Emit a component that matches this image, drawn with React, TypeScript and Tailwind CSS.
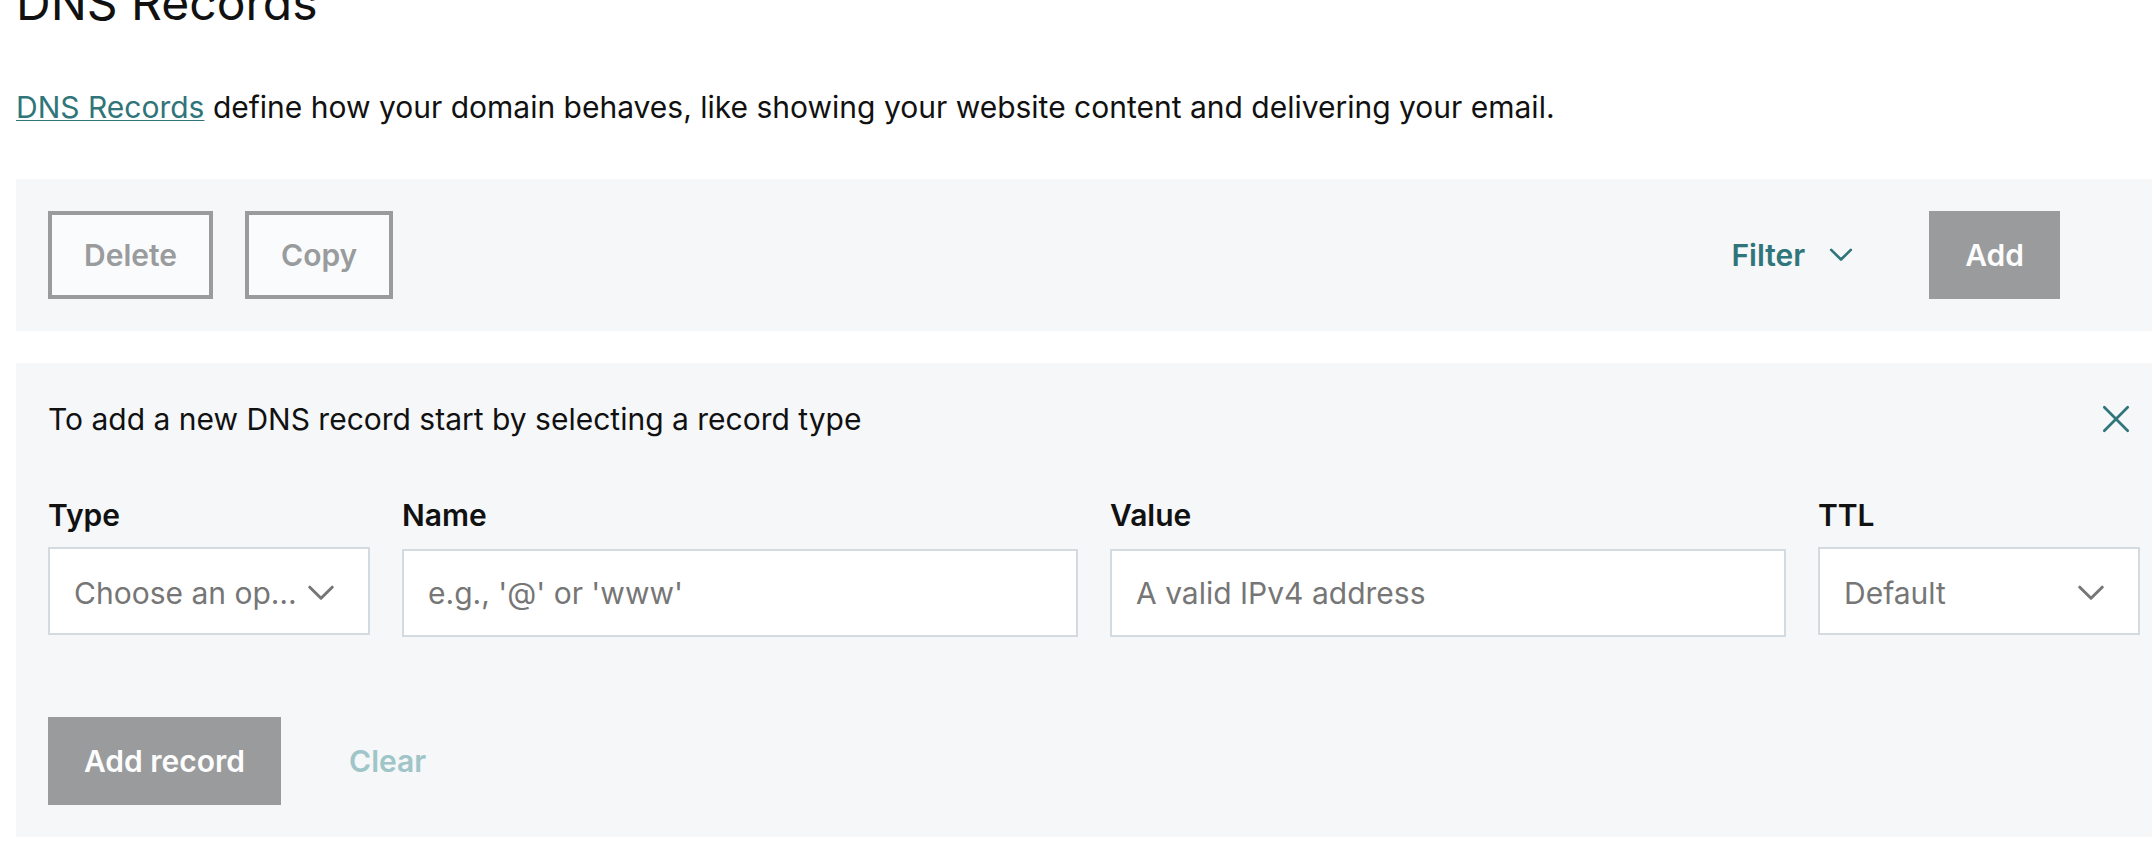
import React from "react";

function Chevron({ className }: { className: string }) {
  return (
    <svg viewBox="0 0 26 16" fill="none" stroke="currentColor" strokeWidth="3" strokeLinecap="round" strokeLinejoin="round" aria-hidden="true" className={className}>
      <path d="M1.8 2.2 13 13.2 24.2 2.2" />
    </svg>
  );
}

function SelectField({ id, label, placeholder, options }: { id: string; label: string; placeholder: string; options: string[] }) {
  return (
    <div className="flex w-[322px] shrink-0 flex-col gap-2">
      <label htmlFor={id} className="font-semibold">{label}</label>
      <div className="grid items-center">
        <select
          id={id}
          defaultValue=""
          className="col-start-1 row-start-1 h-[88px] w-full appearance-none overflow-hidden text-ellipsis whitespace-nowrap border-2 border-[#d4dbe0] bg-white pt-1 pr-[68px] pl-6 text-[#767676]"
        >
          <option value="">{placeholder}</option>
          {options.map((o) => (
            <option key={o}>{o}</option>
          ))}
        </select>
        <Chevron className="pointer-events-none col-start-1 row-start-1 mt-1 mr-9 h-4 w-[26px] justify-self-end text-[#767676]" />
      </div>
    </div>
  );
}

function TextField({ id, label, placeholder }: { id: string; label: string; placeholder: string }) {
  return (
    <div className="flex min-w-0 flex-1 flex-col gap-[10px]">
      <label htmlFor={id} className="font-semibold">{label}</label>
      <input
        id={id}
        type="text"
        placeholder={placeholder}
        className="h-[88px] w-full border-2 border-[#d4dbe0] bg-white px-6 text-[#111] placeholder:text-[#767676]"
      />
    </div>
  );
}

export default function App() {
  return (
    <main className="overflow-hidden bg-white pb-7 pl-4 font-['Inter','Noto_Sans',sans-serif] text-[30px] leading-[48px] text-[#111]">
      <h1 className="-mt-[27px] mb-[50px] text-[48px] leading-[60px]">DNS Records</h1>
      <p className="mb-12">
        <a href="#dns-records" className="text-[#2f7579] underline decoration-1 underline-offset-2">DNS Records</a>{" "}
        define how your domain behaves, like showing your website content and delivering your email.
      </p>

      <section aria-label="Record actions" className="mb-8 flex items-center bg-[#f5f7f9] py-8 pr-[92px] pl-8 font-semibold">
        <div className="flex flex-1 gap-8">
          <button type="button" disabled className="h-[88px] border-4 border-[#999b9c] bg-[#fafbfc] px-8 text-[#999b9c]">Delete</button>
          <button type="button" disabled className="h-[88px] border-4 border-[#999b9c] bg-[#fafbfc] px-8 text-[#999b9c]">Copy</button>
        </div>
        <button type="button" className="mr-[76px] flex items-center gap-6 text-[#2f7579]">
          Filter
          <Chevron className="h-[14px] w-6" />
        </button>
        <button type="button" disabled className="h-[88px] bg-[#999b9c] px-9 text-[#fdfdfd]">Add</button>
      </section>

      <form aria-label="New DNS record" className="bg-[#f5f7f9] py-8 pr-3 pl-8" onSubmit={(e) => e.preventDefault()}>
        <div className="mb-12 flex items-center justify-between">
          <p>To add a new DNS record start by selecting a record type</p>
          <button type="button" aria-label="Close" className="mr-[10px] text-[#2f7579]">
            <svg viewBox="0 0 28 28" fill="none" stroke="currentColor" strokeWidth="2.7" strokeLinecap="round" aria-hidden="true" className="size-7">
              <path d="M2.3 2.3 25.7 25.7M25.7 2.3 2.3 25.7" />
            </svg>
          </button>
        </div>
        <div className="mb-20 flex items-start gap-8">
          <SelectField id="type" label="Type" placeholder="Choose an option" options={["A", "AAAA", "CNAME", "MX", "TXT"]} />
          <TextField id="name" label="Name" placeholder="e.g., '@' or 'www'" />
          <TextField id="value" label="Value" placeholder="A valid IPv4 address" />
          <SelectField id="ttl" label="TTL" placeholder="Default" options={["1/2 Hour", "1 Hour", "Custom"]} />
        </div>
        <div className="flex items-center gap-[68px] font-semibold">
          <button type="submit" disabled className="h-[88px] bg-[#999b9c] px-9 text-[#fdfdfd]">Add record</button>
          <button type="button" disabled className="text-[#a0c5c8]">Clear</button>
        </div>
      </form>
    </main>
  );
}
